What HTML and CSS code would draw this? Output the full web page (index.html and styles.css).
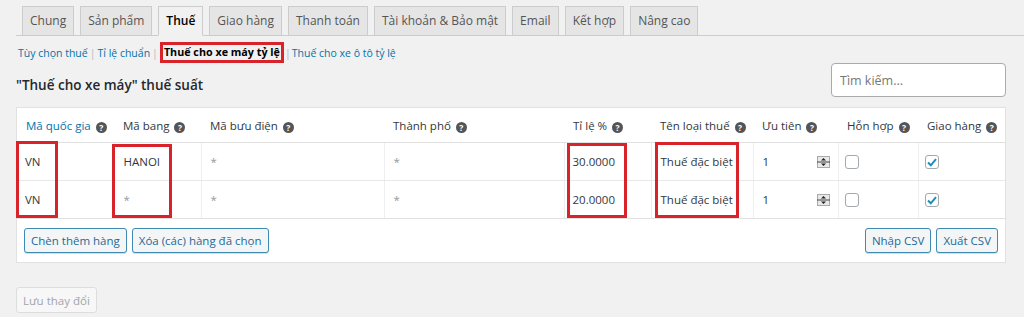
FILE: index.html
```html
<!DOCTYPE html>
<html lang="vi">
<head>
  <meta charset="UTF-8">
  <title>Thuế - Cài đặt</title>
  <link rel="stylesheet" href="styles.css">
</head>
<body>
  <nav class="tabs">
    <a class="tab">Chung</a>
    <a class="tab">Sản phẩm</a>
    <a class="tab active">Thuế</a>
    <a class="tab">Giao hàng</a>
    <a class="tab">Thanh toán</a>
    <a class="tab">Tài khoản &amp; Bảo mật</a>
    <a class="tab">Email</a>
    <a class="tab">Kết hợp</a>
    <a class="tab">Nâng cao</a>
  </nav>

  <div class="subnav">
    <a>Tùy chọn thuế</a><span class="sep">|</span><a>Tỉ lệ chuẩn</a><span class="sep">|</span><strong class="current">Thuế cho xe máy tỷ lệ</strong><span class="sep tight">|</span><a>Thuế cho xe ô tô tỷ lệ</a>
  </div>

  <div class="heading-row">
    <h2>"Thuế cho xe máy" thuế suất</h2>
    <input class="search" type="text" placeholder="Tìm kiếm...">
  </div>

  <div class="rates">
    <table>
      <colgroup>
        <col style="width:97px"><col style="width:87px"><col style="width:183px">
        <col style="width:180px"><col style="width:87px"><col style="width:102px">
        <col style="width:85px"><col style="width:80px"><col style="width:87px">
      </colgroup>
      <thead>
        <tr>
          <th class="sorted">Mã quốc gia <span class="help">?</span></th>
          <th>Mã bang <span class="help">?</span></th>
          <th>Mã bưu điện <span class="help">?</span></th>
          <th>Thành phố <span class="help">?</span></th>
          <th>Tỉ lệ % <span class="help">?</span></th>
          <th>Tên loại thuế <span class="help">?</span></th>
          <th>Ưu tiên <span class="help">?</span></th>
          <th>Hỗn hợp <span class="help">?</span></th>
          <th>Giao hàng <span class="help">?</span></th>
        </tr>
      </thead>
      <tbody>
        <tr>
          <td>VN</td>
          <td>HANOI</td>
          <td class="muted">*</td>
          <td class="muted">*</td>
          <td class="rate">30.0000</td>
          <td>Thuế đặc biệt</td>
          <td><div class="num"><span>1</span><svg class="spin" width="13" height="12" viewBox="0 0 13 12"><rect x="0.5" y="0.5" width="12" height="11" fill="#e9e9e9" stroke="#aaa"/><line x1="0" y1="6" x2="13" y2="6" stroke="#444"/><path d="M4 4.5 L6.5 2 L9 4.5 Z" fill="#222"/><path d="M4 7.5 L6.5 10 L9 7.5 Z" fill="#222"/></svg></div></td>
          <td><span class="check"></span></td>
          <td><span class="check on"><svg width="10" height="9" viewBox="0 0 10 9"><path d="M1 4.5 L3.8 7.3 L9 1.2" fill="none" stroke="#1e8cbe" stroke-width="2"/></svg></span></td>
        </tr>
        <tr>
          <td>VN</td>
          <td class="muted">*</td>
          <td class="muted">*</td>
          <td class="muted">*</td>
          <td class="rate">20.0000</td>
          <td>Thuế đặc biệt</td>
          <td><div class="num"><span>1</span><svg class="spin" width="13" height="12" viewBox="0 0 13 12"><rect x="0.5" y="0.5" width="12" height="11" fill="#e9e9e9" stroke="#aaa"/><line x1="0" y1="6" x2="13" y2="6" stroke="#444"/><path d="M4 4.5 L6.5 2 L9 4.5 Z" fill="#222"/><path d="M4 7.5 L6.5 10 L9 7.5 Z" fill="#222"/></svg></div></td>
          <td><span class="check"></span></td>
          <td><span class="check on"><svg width="10" height="9" viewBox="0 0 10 9"><path d="M1 4.5 L3.8 7.3 L9 1.2" fill="none" stroke="#1e8cbe" stroke-width="2"/></svg></span></td>
        </tr>
      </tbody>
    </table>
    <div class="table-foot">
      <div class="actions">
        <button class="btn">Chèn thêm hàng</button>
        <button class="btn">Xóa (các) hàng đã chọn</button>
      </div>
      <div class="actions">
        <button class="btn">Nhập CSV</button>
        <button class="btn">Xuất CSV</button>
      </div>
    </div>

    <!-- red annotation boxes drawn over the table -->
    <div class="mark mark-country"></div>
    <div class="mark mark-state"></div>
    <div class="mark mark-rate"></div>
    <div class="mark mark-name"></div>
  </div>

  <button class="save" disabled>Lưu thay đổi</button>
</body>
</html>
```

FILE: styles.css
```css
body {
  margin: 0;
  padding: 6px 18px 0 16px;
  background-color: #f1f1f1;
  font-family: "Open Sans", "Noto Sans", sans-serif;
  font-size: 11.5px;
  color: #32373c;
  overflow: hidden;
}
a {
  color: #0073aa;
  text-decoration: none;
}

.tabs {
  display: flex;
  gap: 6px;
  padding-left: 6px;
  border-bottom: 1px solid #ccc;
  margin-right: -18px;
}
.tab {
  display: block;
  height: 28px;
  line-height: 28px;
  padding: 0 7px;
  border: 1px solid #ccc;
  border-bottom: none;
  background-color: #e5e5e5;
  color: #555;
  font-size: 12px;
  margin-bottom: -1px;
}
.tab.active {
  background-color: #f1f1f1;
  color: #000;
  font-weight: 600;
  border-bottom: 1px solid #f1f1f1;
}

.subnav {
  display: flex;
  align-items: center;
  height: 21px;
  padding-top: 6px;
  padding-left: 2px;
  font-size: 10.5px;
}
.sep {
  color: #bbb;
  margin: 0 2px;
}
.sep.tight {
  margin: 0 1px;
}
.current {
  color: #000;
  font-weight: 700;
  font-size: 10.75px;
  border: 3px solid #d8232a;
  padding: 0 1px;
  line-height: 15px;
}

.heading-row {
  display: flex;
  justify-content: space-between;
  align-items: flex-end;
  height: 34px;
}
.heading-row h2 {
  margin: 0 0 3px;
  font-size: 13.5px;
  font-weight: 600;
  color: #23282d;
}
.search {
  width: 175px;
  height: 34px;
  box-sizing: border-box;
  border: 1px solid #aaa;
  border-radius: 4px;
  padding: 0 8px;
  font-family: inherit;
  font-size: 12.5px;
  color: #333;
  background: #fff;
}
.search::placeholder {
  color: #777;
}

.rates {
  position: relative;
  margin-top: 10px;
  background: #fff;
  border: 1px solid #e1e1e1;
}
table {
  width: 100%;
  table-layout: fixed;
  border-collapse: collapse;
}
th {
  height: 34px;
  padding: 0 0 0 9px;
  text-align: left;
  font-weight: 400;
  color: #32373c;
  white-space: nowrap;
  border-bottom: 1px solid #e1e1e1;
}
th.sorted {
  color: #0073aa;
}
td {
  height: 37px;
  padding: 0 0 0 9px;
  border-bottom: 1px solid #e8e8e8;
  border-right: 1px solid #eee;
  white-space: nowrap;
}
td:first-child, td.rate {
  padding-left: 8px;
}
td:last-child {
  border-right: none;
}
tbody tr:last-child td {
  border-bottom: 1px solid #e1e1e1;
}
td.muted {
  color: #999;
}
.help {
  display: inline-block;
  width: 11px;
  height: 11px;
  line-height: 11px;
  border-radius: 50%;
  background-color: #555;
  color: #fff;
  font-size: 8.5px;
  font-weight: 700;
  text-align: center;
  vertical-align: -1px;
  margin-left: 2px;
}
.num {
  display: flex;
  align-items: center;
  justify-content: space-between;
  padding-right: 8px;
}
.spin {
  display: block;
}
.check {
  display: inline-flex;
  align-items: center;
  justify-content: center;
  width: 14px;
  height: 14px;
  box-sizing: border-box;
  border: 1px solid #a4a9ae;
  border-radius: 3px;
  background: #fff;
  vertical-align: middle;
  margin-left: -3px;
}

.table-foot {
  display: flex;
  justify-content: space-between;
  padding: 9px 7px;
}
.actions {
  display: flex;
  gap: 5px;
}
.btn {
  height: 25px;
  padding: 0 6px;
  border: 1px solid #3e8ab0;
  border-radius: 3px;
  background-color: #f3f5f6;
  color: #1e6a98;
  font-family: inherit;
  font-size: 11.5px;
  box-shadow: 0 1px 0 #cfe0ea;
}

.mark {
  position: absolute;
  border: 3px solid #d8232a;
  box-sizing: border-box;
}
.mark-country { left: -1px; top: 33px; width: 42px; height: 77px; }
.mark-state { left: 95px; top: 36px; width: 60px; height: 74px; }
.mark-rate { left: 550px; top: 35px; width: 60px; height: 75px; }
.mark-name { left: 638px; top: 34px; width: 84px; height: 76px; }

.save {
  margin-top: 24px;
  height: 26px;
  padding: 0 6px;
  border: 1px solid #ddd;
  border-radius: 3px;
  background-color: #f7f7f7;
  color: #a0a5aa;
  font-family: inherit;
  font-size: 11.5px;
}
```
